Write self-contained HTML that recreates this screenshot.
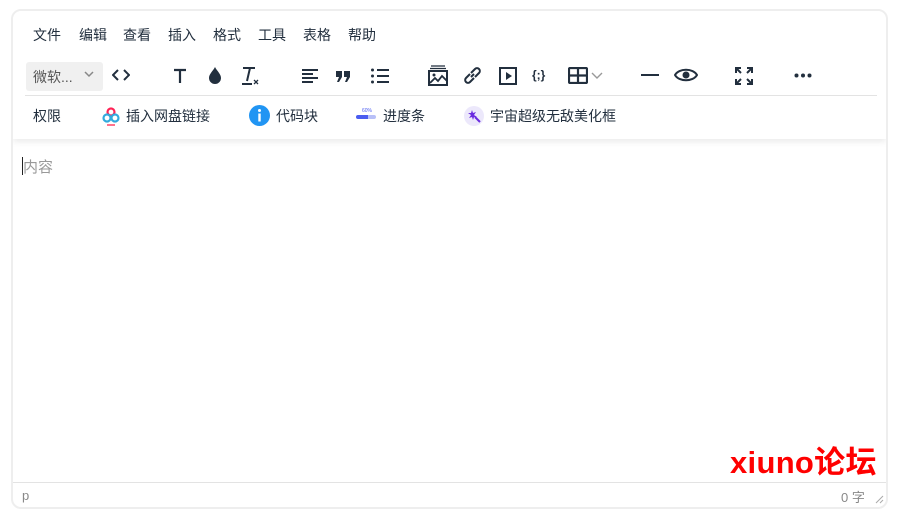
<!DOCTYPE html><html><head><meta charset="utf-8"><style>
*{margin:0;padding:0;box-sizing:border-box}
body{width:898px;height:513px;background:#fff;font-family:"Liberation Sans","Noto Sans CJK SC",sans-serif;position:relative;overflow:hidden;color:#222f3e}
.frame{position:absolute;left:11px;top:9px;width:877px;height:500px;border:2px solid #eee;border-radius:10px;overflow:hidden}
.hdr{position:absolute;left:0;top:0;width:873px;height:128px;box-shadow:0 3px 6px rgba(0,0,0,.08);background:#fff}
.a{position:absolute;font-size:14px;color:#222f3e;white-space:nowrap}
.ic{position:absolute}
svg{display:block}
</style></head><body>
<div class="frame">
<div class="hdr">
<div class="a" style="left:20px;top:14px">文件</div>
<div class="a" style="left:66px;top:14px">编辑</div>
<div class="a" style="left:110px;top:14px">查看</div>
<div class="a" style="left:155px;top:14px">插入</div>
<div class="a" style="left:200px;top:14px">格式</div>
<div class="a" style="left:245px;top:14px">工具</div>
<div class="a" style="left:290px;top:14px">表格</div>
<div class="a" style="left:335px;top:14px">帮助</div>

<div style="position:absolute;left:13px;top:51px;width:77px;height:29px;background:#f0f0f0;border-radius:3px"></div>
<div class="a" style="left:20px;top:56px;color:#555">微软...</div>
<svg class="ic" style="left:71px;top:60px" width="10" height="7"><path d="M1 1l4 4 4-4" stroke="#888" stroke-width="1.5" fill="none"/></svg>
<svg class="ic" style="left:99px;top:57px" width="18" height="14"><path d="M6 2L1 7l5 5M12 2l5 5-5 5" stroke="#222f3e" stroke-width="2" fill="none"/></svg>
<svg class="ic" style="left:160px;top:57px" width="14" height="15"><path d="M1 2h12M7 2v13" stroke="#222f3e" stroke-width="2.2" fill="none"/></svg>
<svg class="ic" style="left:195px;top:55px" width="14" height="18"><path d="M7 1C5 5 1 8 1 12a6 6 0 0012 0C13 8 9 5 7 1z" fill="#222f3e"/></svg>
<svg class="ic" style="left:228px;top:55px" width="20" height="20"><path d="M2 2h12M9 2L6 15M1 18h10" stroke="#222f3e" stroke-width="2" fill="none"/><path d="M13 14l4 4M17 14l-4 4" stroke="#222f3e" stroke-width="1.3"/></svg>
<svg class="ic" style="left:289px;top:58px" width="16" height="14"><path d="M0 1h16M0 5h11M0 9h16M0 13h11" stroke="#222f3e" stroke-width="2"/></svg>
<svg class="ic" style="left:322px;top:59px" width="16" height="12"><path d="M1 1h6v6l-3 5H2l2-5H1zM9 1h6v6l-3 5h-2l2-5H9z" fill="#222f3e"/></svg>
<svg class="ic" style="left:358px;top:57px" width="18" height="16"><path d="M6 2h12M6 8h12M6 14h12" stroke="#222f3e" stroke-width="2"/><circle cx="1.5" cy="2" r="1.5" fill="#222f3e"/><circle cx="1.5" cy="8" r="1.5" fill="#222f3e"/><circle cx="1.5" cy="14" r="1.5" fill="#222f3e"/></svg>
<svg class="ic" style="left:415px;top:54px" width="20" height="21"><path d="M3 1h14M2 3.5h16" stroke="#222f3e" stroke-width="1.2"/><rect x="1" y="6" width="18" height="14" fill="none" stroke="#222f3e" stroke-width="2"/><path d="M2 18l5-5 3 3 4-5 5 5" stroke="#222f3e" stroke-width="1.8" fill="none"/><circle cx="6" cy="10" r="1.5" fill="#222f3e"/></svg>
<svg class="ic" style="left:450px;top:55px" width="19" height="19"><path d="M8 11l3-3M7 8l-4 4a2.8 2.8 0 004 4l4-4M12 11l4-4a2.8 2.8 0 00-4-4L8 7" stroke="#222f3e" stroke-width="2" fill="none"/></svg>
<svg class="ic" style="left:486px;top:56px" width="18" height="18"><rect x="1" y="1" width="16" height="16" fill="none" stroke="#222f3e" stroke-width="2"/><path d="M7 5v8l6-4z" fill="#222f3e"/></svg>
<div class="a" style="left:519px;top:57px;font-size:12px;font-weight:bold">{;}</div>
<svg class="ic" style="left:555px;top:56px" width="20" height="17"><rect x="1" y="1" width="18" height="15" rx="1" fill="none" stroke="#222f3e" stroke-width="2.2"/><path d="M1 8.5h18M10 1v15" stroke="#222f3e" stroke-width="2.2"/></svg>
<svg class="ic" style="left:578px;top:61px" width="12" height="7"><path d="M1 1l5 5 5-5" stroke="#999" stroke-width="1.4" fill="none"/></svg>
<div style="position:absolute;left:628px;top:63px;width:18px;height:2px;background:#222f3e"></div>
<svg class="ic" style="left:661px;top:56px" width="24" height="16"><path d="M1 8C5 1 19 1 23 8 19 15 5 15 1 8z" fill="none" stroke="#222f3e" stroke-width="2"/><circle cx="12" cy="8" r="3.5" fill="#222f3e"/></svg>
<svg class="ic" style="left:722px;top:56px" width="18" height="18"><path d="M1 6V1h5M12 1h5v5M17 12v5h-5M6 17H1v-5M1 1l5 5M17 1l-5 5M17 17l-5-5M1 17l5-5" stroke="#222f3e" stroke-width="2" fill="none"/></svg>
<svg class="ic" style="left:781px;top:62px" width="18" height="5"><circle cx="2.5" cy="2.5" r="2" fill="#222f3e"/><circle cx="9" cy="2.5" r="2" fill="#222f3e"/><circle cx="15.5" cy="2.5" r="2" fill="#222f3e"/></svg>

<div style="position:absolute;left:12px;top:84px;width:852px;height:1px;background:#e3e3e3"></div>
<div class="a" style="left:20px;top:95px">权限</div>
<svg class="ic" style="left:89px;top:96px" width="18" height="20"><circle cx="9" cy="5" r="3.5" fill="none" stroke="#f25" stroke-width="2.2"/><circle cx="5" cy="11" r="3.5" fill="none" stroke="#3ad" stroke-width="2.2"/><circle cx="13" cy="11" r="3.5" fill="none" stroke="#3ad" stroke-width="2.2"/><path d="M5 18h8" stroke="#f46" stroke-width="1.5"/></svg>
<div class="a" style="left:113px;top:95px">插入网盘链接</div>
<svg class="ic" style="left:236px;top:94px" width="21" height="21"><circle cx="10.5" cy="10.5" r="10.5" fill="#2195f3"/><rect x="9.3" y="8.5" width="2.4" height="8" fill="#fff"/><circle cx="10.5" cy="5.5" r="1.5" fill="#fff"/></svg>
<div class="a" style="left:263px;top:95px">代码块</div>
<div style="position:absolute;left:343px;top:104px;width:20px;height:4px;border-radius:2px;background:linear-gradient(90deg,#4a5cf0 60%,#b8c0f8 60%)"></div>
<div style="position:absolute;left:349px;top:97px;font-size:5px;color:#4a5cf0">60%</div>
<div class="a" style="left:370px;top:95px">进度条</div>
<svg class="ic" style="left:451px;top:95px" width="20" height="20"><circle cx="10" cy="10" r="10" fill="#ece8fb"/><path d="M8 4l1 3 3-1-2 3 3 2-3 0-1 3-1-3-3 1 2-3-3-2 3 0z" fill="#6a2be0"/><path d="M11 11l5 5" stroke="#6a2be0" stroke-width="2"/></svg>
<div class="a" style="left:477px;top:95px">宇宙超级无敌美化框</div>
</div>
<div style="position:absolute;left:9px;top:146px;width:1px;height:18px;background:#222"></div>
<div class="a" style="left:10px;top:145px;font-size:15px;color:#999">内容</div>
<div style="position:absolute;left:717px;top:426px;font-size:31px;font-weight:bold;color:#f00;letter-spacing:0.3px">xiuno论坛</div>
<div style="position:absolute;left:0;top:471px;width:873px;height:1px;background:#e3e3e3"></div>
<div class="a" style="left:9px;top:477px;font-size:13px;color:#888">p</div>
<div class="a" style="left:828px;top:476px;font-size:13px;color:#888">0 字</div>
<svg class="ic" style="left:861px;top:483px" width="10" height="10"><path d="M9 2L2 9M9 6L6 9" stroke="#aaa" stroke-width="1"/></svg>
</div>
</body></html>
